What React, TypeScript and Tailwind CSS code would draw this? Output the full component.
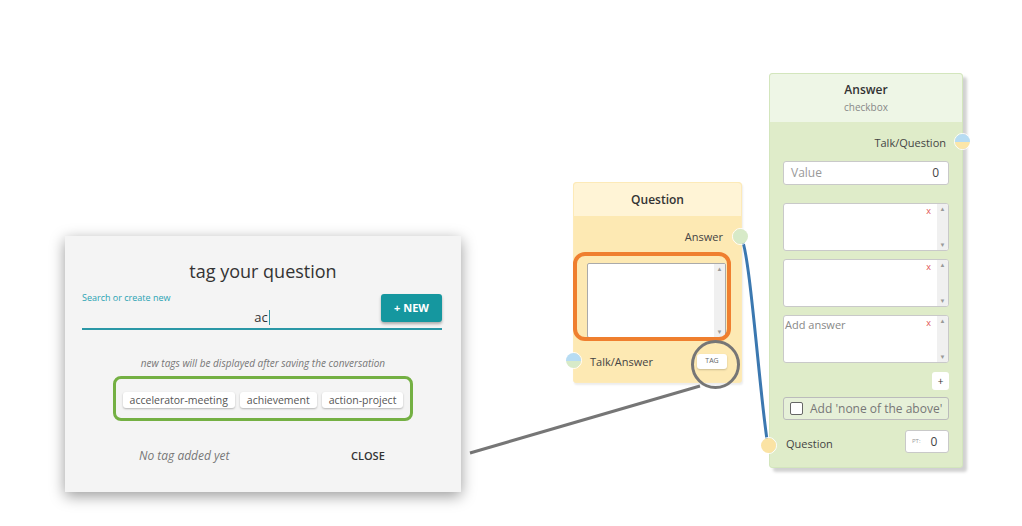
import React from "react";

const font = { fontFamily: '"Open Sans", "Noto Sans", sans-serif' };

function Scrollbar() {
  return (
    <div className="flex w-[11px] flex-col items-center justify-between bg-[#f0f0f0] py-[2px] text-[6px] leading-none text-[#999]">
      <span>▲</span>
      <span>▼</span>
    </div>
  );
}

function AnswerBox({ placeholder }: { placeholder?: string }) {
  return (
    <div className="relative flex h-[48px] w-full overflow-hidden rounded-[3px] border border-[#c9c9c9] bg-white">
      <div className="flex-1 pl-[1px] pt-[1px] text-[11px] leading-[16px] text-[#888]">{placeholder}</div>
      <span className="mr-[6px] mt-[1px] text-[9px] leading-[12px] text-[#e05050]">x</span>
      <Scrollbar />
    </div>
  );
}

function Connector({ className, top, bottom }: { className: string; top: string; bottom: string }) {
  return (
    <div
      className={`absolute h-[17px] w-[17px] overflow-hidden rounded-full border border-white ${className}`}
    >
      <div className={`h-1/2 w-full ${top}`} />
      <div className={`h-1/2 w-full ${bottom}`} />
    </div>
  );
}

function Chip({ children }: { children: React.ReactNode }) {
  return (
    <span className="shrink-0 whitespace-nowrap rounded-[3px] bg-white px-[7px] text-[10.5px] leading-[16px] text-[#555] shadow-[0_1px_2px_rgba(0,0,0,0.25)]">
      {children}
    </span>
  );
}

export default function App() {
  return (
    <div className="relative h-[526px] w-[1022px] overflow-hidden bg-white text-[#333]" style={font}>
      {/* Question node */}
      <div className="absolute left-[573px] top-[182px] flex h-[201px] w-[169px] flex-col rounded-[3px] border border-[#fdeab8] bg-[#fde9b3] shadow-[1px_2px_2px_rgba(0,0,0,0.08)]">
        <div className="flex h-[33px] items-center justify-center rounded-t-[3px] bg-[#fff4d6] text-[12px] font-semibold text-[#333]">
          Question
        </div>
        <div className="mt-[14px] pr-[18px] text-right text-[11px] leading-[14px] text-[#444]">Answer</div>
        <div className="ml-[13px] mt-[19px] flex h-[75px] w-[139px] overflow-hidden rounded-[2px] border border-[#aaa] bg-white">
          <div className="flex-1" />
          <Scrollbar />
        </div>
        <div className="mt-[16px] flex items-center justify-between pl-[16px] pr-[14px]">
          <span className="text-[11px] leading-[14px] text-[#444]">Talk/Answer</span>
          <span className="flex h-[15px] w-[30px] items-center justify-center rounded-[3px] bg-white text-[7px] text-[#666] shadow-[0_1px_2px_rgba(0,0,0,0.2)]">
            TAG
          </span>
        </div>
      </div>

      {/* Answer node */}
      <div className="absolute left-[769px] top-[73px] flex h-[395px] w-[194px] flex-col rounded-[3px] border border-[#d3e6bd] bg-[#dfecc9] shadow-[4px_4px_3px_rgba(0,0,0,0.18)]">
        <div className="flex h-[48px] flex-col items-center justify-center rounded-t-[3px] bg-[#eef6e6]">
          <span className="text-[12px] font-semibold leading-[16px] text-[#333]">Answer</span>
          <span className="mt-[2px] text-[10px] leading-[14px] text-[#888]">checkbox</span>
        </div>
        <div className="mt-[14px] pr-[16px] text-right text-[11px] leading-[14px] text-[#444]">Talk/Question</div>
        <div className="flex flex-col px-[13px]">
          <div className="mt-[11px] flex h-[24px] items-center justify-between rounded-[3px] border border-[#c9c9c9] bg-white pl-[7px] pr-[9px] text-[12px] text-[#444]">
            <span className="text-[#999]">Value</span>
            <span>0</span>
          </div>
          <div className="mt-[18px] flex flex-col gap-[8px]">
            <AnswerBox />
            <AnswerBox />
            <AnswerBox placeholder="Add answer" />
          </div>
          <div className="mt-[9px] flex justify-end">
            <span className="flex h-[18px] w-[17px] items-center justify-center rounded-[3px] bg-white text-[10px] text-[#333]">
              +
            </span>
          </div>
          <div className="mt-[7px] flex h-[23px] items-center gap-[7px] rounded-[3px] border border-[#bbb] bg-[#e6f0d8] pl-[6px] text-[12px] text-[#777]">
            <span className="h-[13px] w-[13px] rounded-[2px] border border-[#666] bg-white" />
            <span>Add 'none of the above'</span>
          </div>
          <div className="mt-[10px] flex items-center justify-between">
            <span className="ml-[3px] mt-[5px] text-[11px] text-[#444]">Question</span>
            <span className="flex h-[23px] w-[44px] items-center gap-[10px] rounded-[3px] border border-[#c9c9c9] bg-white pl-[6px] text-[12px] text-[#444]">
              <span className="text-[6px] text-[#999]">PT:</span>
              <span>0</span>
            </span>
          </div>
        </div>
      </div>

      {/* Lines */}
      <svg className="pointer-events-none absolute left-0 top-0" width="1022" height="526">
        <path d="M741 237 C 750 250, 760 400, 768 446" stroke="#3b78b0" strokeWidth="3" fill="none" />
        <line x1="470" y1="453" x2="700" y2="386" stroke="#767676" strokeWidth="3" />
      </svg>

      {/* Connectors */}
      <Connector className="left-[732px] top-[228px]" top="bg-[#d7eac8]" bottom="bg-[#d7eac8]" />
      <Connector className="left-[565px] top-[352px]" top="bg-[#b7dcf3]" bottom="bg-[#d7eac8]" />
      <Connector className="left-[954px] top-[133px]" top="bg-[#b7dcf3]" bottom="bg-[#fbe6a9]" />
      <Connector className="left-[760px] top-[437px]" top="bg-[#fbe3a4]" bottom="bg-[#fbe3a4]" />

      {/* Highlights */}
      <div className="absolute left-[573px] top-[252px] h-[89px] w-[158px] rounded-[12px] border-[4px] border-[#ef7f2f]" />
      <div className="absolute left-[691px] top-[340px] h-[49px] w-[49px] rounded-full border-[3px] border-[#767676]" />

      {/* Dialog */}
      <div className="absolute left-[65px] top-[236px] flex h-[256px] w-[396px] flex-col bg-[#f4f4f4] shadow-[0_4px_14px_rgba(0,0,0,0.4)]">
        <div className="pt-[23px] text-center text-[18px] leading-[24px] text-[#333]">tag your question</div>
        <div className="relative ml-[17px] mr-[19px] mt-[9px] border-b-2 border-[#2a97a6]">
          <div className="flex flex-col pb-[3px]">
            <span className="text-[9px] leading-[12px] text-[#2aa3b3]">Search or create new</span>
            <span className="mt-[5px] flex items-center justify-center text-[13px] leading-[16px] text-[#333]">
              ac<span className="ml-[1px] h-[15px] w-[1px] bg-[#2a97a6]" />
            </span>
          </div>
          <button className="absolute right-0 top-[2px] flex h-[28px] w-[61px] items-center justify-center rounded-[3px] bg-[#15979f] text-[11px] font-bold text-white shadow-[0_2px_3px_rgba(0,0,0,0.3)]">
            + NEW
          </button>
        </div>
        <div className="mt-[27px] text-center text-[10px] italic leading-[12px] text-[#777]">
          new tags will be displayed after saving the conversation
        </div>
        <div className="mt-[7px] flex h-[45px] w-[300px] items-center justify-center gap-[5px] self-center rounded-[8px] border-[3px] border-[#74b043] pt-[2px]">
          <Chip>accelerator-meeting</Chip>
          <Chip>achievement</Chip>
          <Chip>action-project</Chip>
        </div>
        <div className="mt-[27px] flex items-center pl-[74px]">
          <span className="w-[212px] text-[12px] italic leading-[16px] text-[#777]">No tag added yet</span>
          <span className="text-[11px] font-semibold leading-[16px] text-[#333]">CLOSE</span>
        </div>
      </div>
    </div>
  );
}
